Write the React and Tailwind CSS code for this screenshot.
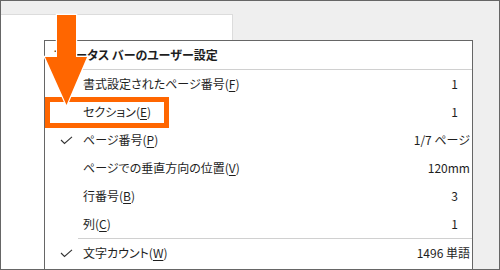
import React from 'react';

const items = [
  { label: '書式設定されたページ番号', key: 'F', value: '1' },
  { label: 'セクション', key: 'E', value: '1' },
  { label: 'ページ番号', key: 'P', value: '1/7 ページ', checked: true, wide: true },
  { label: 'ページでの垂直方向の位置', key: 'V', value: '120mm', wide: true },
  { label: '行番号', key: 'B', value: '3' },
  { label: '列', key: 'C', value: '1' },
];

const font = "[font-family:'Noto_Sans_CJK_JP','Noto_Sans',sans-serif] [font-feature-settings:'palt']";

function Check() {
  return (
    <svg width="13" height="9" viewBox="0 0 13 9" className="text-[#333]">
      <path d="M1 4 L4.5 7.5 L12 0.8" fill="none" stroke="currentColor" strokeWidth="1.1" />
    </svg>
  );
}

function MenuRow({ item }) {
  return (
    <div className="flex h-[28px] items-center text-[12px] text-[#1e1e1e]">
      <div className="flex w-[38px] justify-end pr-[10px]">{item.checked && <Check />}</div>
      <div className="flex-1">
        {item.label}(<span className="underline underline-offset-2">{item.key}</span>)
      </div>
      <div className={item.wide ? 'pr-[2px]' : 'pr-[14px]'}>{item.value}</div>
    </div>
  );
}

function App() {
  return (
    <div className={`relative h-[270px] w-[500px] overflow-hidden border border-[#666] bg-[#efefef] ${font}`}>
      <div className="mt-[13px] h-[260px] w-[232px] border-t border-r border-[#dcdcdc] bg-white" />

      <div className="absolute left-[43px] top-[39px] h-[240px] w-[429px] border border-[#666] bg-white">
        <div className="flex h-[28px] items-center pl-[8px] text-[12px] font-bold text-[#1e1e1e]">
          ステータス バーのユーザー設定
        </div>
        <div className="ml-[33px] h-px bg-[#d0d0d0]" />
        {items.map((item) => (
          <MenuRow key={item.key} item={item} />
        ))}
        <div className="ml-[33px] h-px bg-[#d0d0d0]" />
        <div className="flex h-[28px] items-center text-[12px] text-[#1e1e1e]">
          <div className="flex w-[38px] justify-end pr-[10px]">
            <Check />
          </div>
          <div className="flex-1">
            文字カウント(<span className="underline underline-offset-2">W</span>)
          </div>
          <div className="pr-[2px]">1496 単語</div>
        </div>
      </div>

      <div className="absolute left-[44px] top-[96px] h-[31px] w-[124px] border-[5px] border-[#ff6600]" />

      <svg className="absolute left-[39px] top-[9px]" width="56" height="100" viewBox="40 10 56 100">
        <path
          d="M57 15 L76 15 L76 57 L87 57 L66.5 105 L45 57 L57 57 Z"
          fill="#ff6600"
          stroke="#fff"
          strokeWidth="2.5"
          strokeLinejoin="miter"
          paintOrder="stroke"
        />
      </svg>
    </div>
  );
}

export default App;
